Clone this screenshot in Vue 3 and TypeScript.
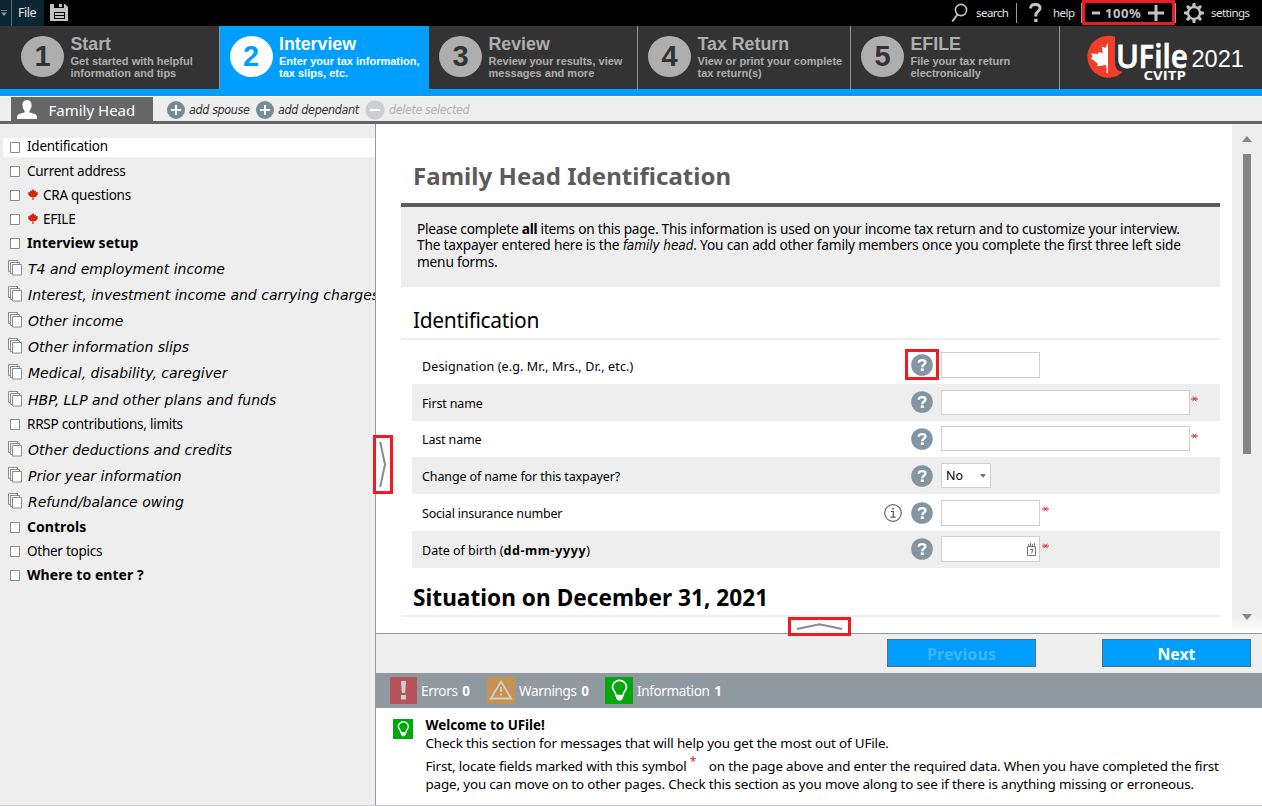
<script setup lang="ts">
interface Step { n: number; title: string; lines: [string, string]; active?: boolean }
interface MenuItem { label: string; kind?: 'multi' | 'bold'; leaf?: boolean; active?: boolean }
interface Field { label: string; strong?: string; control: 'short' | 'long' | 'select' | 'date'; required?: boolean; info?: boolean; marked?: boolean }

const steps: Step[] = [
  { n: 1, title: 'Start', lines: ['Get started with helpful', 'information and tips'] },
  { n: 2, title: 'Interview', lines: ['Enter your tax information,', 'tax slips, etc.'], active: true },
  { n: 3, title: 'Review', lines: ['Review your results, view', 'messages and more'] },
  { n: 4, title: 'Tax Return', lines: ['View or print your complete', 'tax return(s)'] },
  { n: 5, title: 'EFILE', lines: ['File your tax return', 'electronically'] },
]

const menu: MenuItem[] = [
  { label: 'Identification', active: true },
  { label: 'Current address' },
  { label: 'CRA questions', leaf: true },
  { label: 'EFILE', leaf: true },
  { label: 'Interview setup', kind: 'bold' },
  { label: 'T4 and employment income', kind: 'multi' },
  { label: 'Interest, investment income and carrying charges', kind: 'multi' },
  { label: 'Other income', kind: 'multi' },
  { label: 'Other information slips', kind: 'multi' },
  { label: 'Medical, disability, caregiver', kind: 'multi' },
  { label: 'HBP, LLP and other plans and funds', kind: 'multi' },
  { label: 'RRSP contributions, limits' },
  { label: 'Other deductions and credits', kind: 'multi' },
  { label: 'Prior year information', kind: 'multi' },
  { label: 'Refund/balance owing', kind: 'multi' },
  { label: 'Controls', kind: 'bold' },
  { label: 'Other topics' },
  { label: 'Where to enter ?', kind: 'bold' },
]

const fields: Field[] = [
  { label: 'Designation (e.g. Mr., Mrs., Dr., etc.)', control: 'short', marked: true },
  { label: 'First name', control: 'long', required: true },
  { label: 'Last name', control: 'long', required: true },
  { label: 'Change of name for this taxpayer?', control: 'select' },
  { label: 'Social insurance number', control: 'short', required: true, info: true },
  { label: 'Date of birth (', strong: 'dd-mm-yyyy', control: 'date', required: true },
]
</script>

<template>
  <div class="app">
    <header class="topbar">
      <div class="quick"><svg width="11" height="26"><path d="M1 10.5h6" stroke="#75858c" /><path d="M1 12.5h6l-3 3.5z" fill="#8d989d" /></svg></div>
      <div class="file">File</div>
      <svg class="floppy" width="18" height="18" viewBox="0 0 18 18">
        <path fill="#c3c3c3" d="M0 0h15l3 3v14H0z" />
        <path fill="#000" d="M4 0h10v4H4zM4 8h11v7H4z" />
        <path fill="#c3c3c3" d="M9 0h3v3H9zM5 9h9v2H5zM5 12h9v2H5z" />
      </svg>
      <div class="tools">
        <svg class="t-search" width="17" height="20" viewBox="0 0 17 20"><circle cx="10" cy="7" r="5.6" fill="none" stroke="#c3c3c3" stroke-width="1.6" /><path d="M6.5 11.5L1.3 18.5" stroke="#c3c3c3" stroke-width="2" /></svg>
        <span class="l-search">search</span>
        <i class="sep"></i>
        <svg class="t-help" width="13" height="20" viewBox="0 0 13 20"><path d="M1.6 5.4C1.6 2.6 3.4 1.4 6.2 1.4S11 2.8 11 5.3C11 8.7 6.8 8.3 6.8 12.6v1" fill="none" stroke="#c3c3c3" stroke-width="3" /><path d="M5.2 15.8h3.3v3.2H5.2z" fill="#c3c3c3" /></svg>
        <span class="l-help">help</span>
        <i class="sep"></i>
        <div class="zoom">
          <svg width="8" height="4"><path d="M0 0.5h8v3H0z" fill="#c3c3c3" /></svg>
          <b>100%</b>
          <svg width="16" height="16"><path d="M0 6.500h16v3H0zM6.500 0h3v16h-3z" fill="#c3c3c3" /></svg>
        </div>
        <i class="sep"></i>
        <svg class="t-gear" width="20" height="20" viewBox="-10 -10 20 20">
          <circle r="6" fill="none" stroke="#c3c3c3" stroke-width="2.4" />
          <g fill="#c3c3c3"><path v-for="a in 8" :key="a" d="M-1.9 -6.4L-1.3 -10h2.6L1.9 -6.4z" :transform="`rotate(${a * 45})`" /></g>
        </svg>
        <span class="l-set">settings</span>
      </div>
    </header>

    <nav class="steps">
      <div v-for="s in steps" :key="s.n" class="step" :class="['s' + s.n, { active: s.active }]">
        <div class="num">{{ s.n }}</div>
        <div class="desc">
          <div class="name">{{ s.title }}</div>
          <div>{{ s.lines[0] }}</div>
          <div>{{ s.lines[1] }}</div>
        </div>
      </div>
      <svg class="logo" width="202" height="63" viewBox="1060 26 202 63">
        <path fill="#f03e2b" d="M1115 36.8A21 21 0 1 0 1123 71.8C1118 71.5 1115 69 1115 62z" />
        <path fill="#fff" d="M1108 43l-2.800 5-3.400-1.600 1 7-4-1.700-.6 2.400-6.900-.6 1.300 3.500-1.800 1.200 7.100 5.600-.7 2.500 9-1.200.6 8.200h1.200z" />
        <text x="1116" y="68" class="uf u" textLength="23" lengthAdjust="spacingAndGlyphs">U</text>
        <text x="1138.500" y="68" class="uf" textLength="49.500" lengthAdjust="spacingAndGlyphs">File</text>
        <text x="1143.5" y="80" class="cv" textLength="42.5" lengthAdjust="spacingAndGlyphs">CVITP</text>
        <text x="1191.500" y="67" class="yr" textLength="52.500" lengthAdjust="spacingAndGlyphs">2021</text>
      </svg>
    </nav>

    <div class="tabs">
      <div class="tab">
        <svg width="20" height="19" viewBox="0 0 20 19"><path fill="#fff" d="M10 0c3 0 4.600 2 4.600 5 0 2.500-1 4.500-2.200 5.700v1.800c2.600.8 7.600 1.200 7.600 4.200V19H0v-2.300c0-3 5-3.400 7.600-4.200v-1.800C6.400 9.500 5.400 7.500 5.400 5c0-3 1.600-5 4.600-5z" /></svg>
        <span>Family Head</span>
      </div>
      <svg class="round a1" width="20" height="20" viewBox="0 0 20 20"><circle cx="10" cy="10" r="9" fill="#768a98" /><path d="M5 10h10M10 5v10" stroke="#fff" stroke-width="2" /></svg>
      <span class="act w1">add spouse</span>
      <svg class="round" width="20" height="20" viewBox="0 0 20 20"><circle cx="10" cy="10" r="9" fill="#768a98" /><path d="M5 10h10M10 5v10" stroke="#fff" stroke-width="2" /></svg>
      <span class="act w2">add dependant</span>
      <svg class="round" width="20" height="20" viewBox="0 0 20 20"><circle cx="10" cy="10" r="9.700" fill="#cbcfd2" /><path d="M5 10h10" stroke="#fff" stroke-width="2" /></svg>
      <span class="act off">delete selected</span>
    </div>

    <div class="body">
      <aside class="side">
        <div v-for="m in menu" :key="m.label" class="item" :class="[m.kind, { active: m.active }]">
          <svg v-if="m.kind === 'multi'" class="pages" width="15" height="16"><g fill="#fff" stroke="#8a8a8a"><path d="M.5 .5h9v11h-9z" /><path d="M2.500 2.500h9v11h-9z" /><path d="M4.500 4.500h9v10.500h-9z" /></g></svg>
          <svg v-else class="page" width="10" height="11"><path d="M.5 .5h9v10h-9z" fill="#fff" stroke="#8a8a8a" /></svg>
          <svg v-if="m.leaf" class="leaf" width="10" height="11" viewBox="0 0 10 11"><path fill="#cf2a10" d="M5 0l1.300 1.700 1.500-.3v1.700L10 3.200 9.500 5l.5.800-2.400 2.200-2.100.3.100 2.700h-1.200l.1-2.700-2.100-.3L0 5.800.5 5 0 3.200l2.200-.1V1.400l1.500.3z" /></svg>
          <span>{{ m.label }}</span>
        </div>
      </aside>

      <section class="main">
        <div class="page-area">
          <div class="content">
            <h1>Family Head Identification</h1>
            <div class="intro">
              <p class="p1">Please complete <b>all</b> items on this page. This information is used on your income tax return and to customize your interview.</p>
              <p class="p2">The taxpayer entered here is the <em>family head</em>. You can add other family members once you complete the first three left side</p>
              <p class="p3">menu forms.</p>
            </div>
            <h2>Identification</h2>
            <div class="form">
              <div v-for="(f, i) in fields" :key="f.label" class="field" :class="'f' + i">
                <span class="label">{{ f.label }}<template v-if="f.strong"><b>{{ f.strong }}</b>)</template></span>
                <span class="info"><svg v-if="f.info" width="18" height="18" viewBox="0 0 18 18"><circle cx="9" cy="9" r="8.300" fill="#fff" stroke="#666" stroke-width="1.200" /><path d="M7 7.500h2.300v5.500M6.500 13.200h5" fill="none" stroke="#555" stroke-width="1.200" /><path d="M8.200 4h1.600v1.600H8.200z" fill="#555" /></svg></span>
                <span class="help">
                  <svg width="22" height="22" viewBox="0 0 22 22"><circle cx="11" cy="11" r="10.800" fill="#8395a2" /><path d="M7.700 8.700C7.700 6.900 9 6.200 11 6.200s3.500.8 3.500 2.300c0 2.100-3.300 2-3.300 4.700" fill="none" stroke="#fff" stroke-width="2.300" /><path d="M9.800 14.400h3v2.600h-3z" fill="#fff" /></svg>
                  <i v-if="f.marked" class="mark m-help"></i>
                </span>
                <span class="box" :class="f.control">
                  <template v-if="f.control === 'select'">No<svg width="6" height="4"><path d="M0 0h6L3 4z" fill="#777" /></svg></template>
                  <svg v-if="f.control === 'date'" width="9" height="13" viewBox="0 0 9 13"><path d="M.5 3.500h8v9h-8zM1.500 3V1M3.500 3V0M5.500 3V1M7.500 3V0M3 6.500h3L4.500 10.500" fill="none" stroke="#777" /></svg>
                </span>
                <svg v-if="f.required" class="star" width="7" height="6" viewBox="0 0 7 6"><path d="M0 3h7M1.500 .7l4 4.600M5.500 .7l-4 4.600" stroke="#e2231a" stroke-width="1" /></svg>
              </div>
            </div>
            <h2 class="sit">Situation on December 31, 2021</h2>
          </div>
          <div class="scroll">
            <svg width="10" height="6"><path d="M0 6h10L5 0z" fill="#858585" /></svg>
            <div class="thumb"></div>
            <svg class="down" width="10" height="6"><path d="M0 0h10L5 6z" fill="#858585" /></svg>
          </div>
          <div class="mark m-bottom"><svg width="47" height="7"><path d="M1 6L23.500 1.200L46 6" fill="none" stroke="#8a8a8a" stroke-width="2" /></svg></div>
          <div class="mark m-left"><svg width="8" height="47"><path d="M1.200 1L6 23.500L1.200 46" fill="none" stroke="#8a8a8a" stroke-width="2" /></svg></div>
        </div>
        <div class="buttons">
          <button class="btn dim">Previous</button>
          <button class="btn">Next</button>
        </div>
        <div class="status">
          <svg width="27" height="27"><path d="M0 0h27v27H0z" fill="#b9535b" /><path d="M11 4h5l-.8 12h-3.400zM11 18h5v4.500h-5z" fill="#cfcfd2" /></svg>
          <span class="c1">Errors <b>0</b></span>
          <svg width="28" height="27"><path d="M0 0h28v27H0z" fill="#c7924f" /><path d="M14 4.500L24.200 21.500H3.800z" fill="none" stroke="#cfcfd2" stroke-width="1.800" /><path d="M14 10v8.500" stroke="#cfcfd2" stroke-width="1.800" stroke-dasharray="5 1.500" /></svg>
          <span class="c2">Warnings <b>0</b></span>
          <svg width="28" height="27" viewBox="0 0 28 27"><path d="M0 0h28v27H0z" fill="#00a80e" /><path d="M11 18.500C11 15 7.500 13.500 7.500 9.900a7 6.500 0 0 1 14 0C21.500 13.500 18 15 18 18.500z" fill="none" stroke="#fff" stroke-width="1.700" /><path d="M10.500 18.500h8l-1 3.500-1.700 1.600h-2.600L11.500 22z" fill="#fff" /></svg>
          <span class="c3">Information <b>1</b></span>
        </div>
        <div class="messages">
          <svg width="20" height="20" viewBox="0 0 28 28"><path d="M0 0h28v28H0z" fill="#00a80e" /><path d="M11 19C11 15.500 7.500 14 7.500 10.400a7 6.500 0 0 1 14 0C21.500 14 18 15.500 18 19z" fill="none" stroke="#fff" stroke-width="1.900" /><path d="M10.500 19h8l-1 3.500-1.700 1.600h-2.600l-1.700-1.600z" fill="#fff" /></svg>
          <div class="text">
            <p class="w">Welcome to UFile!</p>
            <p class="second">Check this section for messages that will help you get the most out of UFile.</p>
            <p>First, locate fields marked with this symbol <i class="ast">*</i>on the page above and enter the required data. When you have completed the first</p>
            <p>page, you can move on to other pages. Check this section as you move along to see if there is anything missing or erroneous.</p>
          </div>
        </div>
      </section>
    </div>
  </div>
</template>

<style>
body { margin: 0; background: #fff; }
</style>

<style scoped>
* { box-sizing: border-box; }
.app { width: 1262px; height: 806px; overflow: hidden; display: flex; flex-direction: column; font-family: "Noto Sans", "Open Sans", sans-serif; color: #000; white-space: nowrap; }
svg { display: block; flex: none; }
p, h1, h2 { margin: 0; }

.topbar { height: 26px; flex: none; background: #000; display: flex; align-items: center; color: #e4e4e4; }
.quick { width: 11px; height: 26px; background: #0b2532; }
.file { width: 33px; height: 26px; background: #0b2532; border-left: 1px solid #5d6b72; padding-left: 6px; font-size: 12.500px; line-height: 25px; letter-spacing: -.45px; }
.floppy { margin-left: 6px; margin-top: -1px; }
.tools { display: flex; align-items: center; height: 26px; margin-left: 883px; font-size: 11.500px; letter-spacing: -.55px; line-height: 26px; }
.sep { width: 1px; height: 20px; background: #9a9a9a; }
.t-search { margin-top: -1px; }
.l-search { margin-left: 8px; width: 40px; }
.t-help { margin: 0 0 0 12px; }
.l-help { margin-left: 11px; width: 28px; }
.zoom { width: 93px; height: 25px; border: 3px solid #ed1c24; margin-top: -1px; display: flex; align-items: center; padding-left: 7px; color: #c3c3c3; }
.zoom b { font-size: 13px; letter-spacing: .6px; line-height: 18px; margin: 1px 0 0 5px; width: 43px; }
.t-gear { margin-left: 8px; }
.l-set { margin-left: 7px; }

.steps { height: 63px; flex: none; background: #333; display: flex; }
.step { display: flex; height: 63px; border-right: 1px solid #8d979d; font: bold 11px/12px "Liberation Sans", Arial, sans-serif; color: #aeaeae; padding-top: 10px; }
.num { width: 43px; height: 41px; border-radius: 50%; background: #aeaeae; color: #333; font-size: 29px; line-height: 41px; text-align: center; margin-right: 6.500px; flex: none; }
.name { font-size: 17.800px; line-height: 17px; height: 19px; }
.active.step { background: #009fff; color: #fff; border-right-color: #009fff; }
.active .num { background: #fff; color: #009fff; }
.s1 { width: 220px; padding-left: 21px; }
.s2 { width: 209px; padding-left: 9.500px; }
.s3 { width: 209px; padding-left: 10px; }
.s4 { width: 213px; padding-left: 10px; }
.s5 { width: 209px; padding-left: 10px; }
.uf { font: 600 32px "Noto Sans", sans-serif; fill: #fff; stroke: #fff; stroke-width: .4px; }
.u { font-weight: 500; stroke-width: .8px; }
.cv { font: bold 13px "Open Sans", sans-serif; fill: #fff; }
.yr { font: 23.500px "Liberation Sans", Arial, sans-serif; fill: #fff; }

.tabs { height: 35px; flex: none; border-top: 7px solid #009fff; border-bottom: 3px solid #666; background: #eee; box-shadow: inset 0 1px #fff; display: flex; align-items: center; }
.tab { height: 24px; margin: 1px 12px 0 11px; width: 142px; background: #666; display: flex; align-items: center; color: #fff; font-size: 15px; line-height: 26px; padding-left: 6px; }
.tab span { margin: 1px 0 0 11.500px; }
.round { margin: 2px -1px 0 1px; }
.act { font: italic 12.500px/26px "DejaVu Sans Condensed", "DejaVu Sans", sans-serif; letter-spacing: -.4px; margin: 3px 0 0 4px; color: #333; }
.w1 { width: 65px; }
.w2 { width: 86px; letter-spacing: -.36px; }
.off { color: #b4b4b4; margin-left: 5px; letter-spacing: -.42px; }

.body { flex: 1; display: flex; min-height: 0; border-bottom: 1px solid #c0ced6; }
.side { width: 376px; flex: none; background: #eee; border-right: 1px solid #8f989f; padding-top: 14px; overflow: hidden; }
.item { height: 24px; display: flex; align-items: center; font-size: 13.500px; letter-spacing: -.25px; line-height: 24px; padding-left: 10px; }
.page { margin: 1px 7px 0 0; }
.leaf { margin: -1px 5px 0 1px; }
.item.active { height: 19px; background: #fff; margin: 0 0 2px 3px; padding-left: 7px; line-height: 16px; }
.item.active span { margin-top: -3px; }
.item.active .page { margin-top: -1px; }
.item.bold { font-weight: bold; font-size: 14px; letter-spacing: .05px; }
.item.multi { height: 26.220px; padding-left: 8px; font: italic 14px/26px "DejaVu Sans", sans-serif; letter-spacing: 0; }
.item.multi span { padding-top: 1px; }
.pages { margin: -1px 5px 0 0; }

.main { flex: 1; min-width: 0; display: flex; flex-direction: column; }
.page-area { height: 510px; flex: none; display: flex; border-bottom: 1px solid #8f989f; position: relative; }
.content { width: 856px; padding: 0 12px 0 25px; }
h1 { height: 83px; border-bottom: 4px solid #5b5b5b; font-size: 24px; line-height: 34px; padding: 35px 0 0 12px; color: #5b5b5b; letter-spacing: .04px; }
.intro { height: 80px; background: #eee; padding: 14px 0 0 16px; font-size: 13.700px; line-height: 16.400px; letter-spacing: -.2px; }
.p1 { letter-spacing: -.245px; }
.intro em { font: italic 13.500px/16px "DejaVu Sans Condensed", sans-serif; letter-spacing: -.1px; }
h2 { height: 53px; border-bottom: 2px solid #eee; font-size: 21px; font-weight: normal; letter-spacing: -.36px; line-height: 30px; padding: 18px 0 0 12px; }
.form { margin: 7px 0 0 11px; }
.field { height: 36.800px; display: flex; align-items: center; font-size: 12.500px; line-height: 20px; padding-left: 10px; }
.field:nth-child(even) { background: #eee; }
.label { width: 462px; padding-top: 3px; }
.f0 .label { letter-spacing: .13px; }
.f1 .label, .f2 .label { letter-spacing: -.15px; }
.f3 .label { letter-spacing: -.12px; }
.f4 .label { letter-spacing: -.2px; }
.f5 .label b { letter-spacing: .6px; }
.info { width: 27px; }
.help { width: 30px; position: relative; padding-top: 0; }
.box { background: #fff; border: 1px solid #d0d0d0; width: 99px; height: 26px; display: flex; align-items: center; }
.long { width: 249px; height: 25px; }
.select { width: 50px; height: 25px; padding: 0 4px 0 4px; justify-content: space-between; font-size: 12.500px; }
.date { justify-content: flex-end; padding-right: 3px; }
.star { align-self: flex-start; margin: 12px 0 0 1px; }
.short + .star, .date + .star { margin-left: 2px; }
.sit { height: 49px; font-size: 22.600px; font-weight: bold; letter-spacing: 0.04px; padding-top: 15px; line-height: 29px; }

.scroll { width: 30px; height: 509px; background: linear-gradient(#eee 490px, #fff 509px); display: flex; flex-direction: column; align-items: center; padding-top: 12px; }
.thumb { width: 8px; height: 300px; background: #858585; margin-top: 12px; }
.down { margin-top: 160px; }

.mark { position: absolute; border: 3px solid #ed1c24; display: flex; align-items: center; justify-content: center; }
.m-help { left: -6px; top: -5px; width: 34px; height: 31px; }
.m-bottom { left: 412px; top: 493px; width: 63px; height: 19px; background: #fff; }
.m-left { left: -3px; top: 311px; width: 20px; height: 59px; background: #fff; }

.buttons { height: 39px; flex: none; background: #eee; display: flex; justify-content: flex-end; padding: 5px 11px 0 0; gap: 66px; }
.btn { width: 149px; height: 28px; border: 1px solid #5f6a72; background: #009fff; color: #fff; font: bold 15.800px/24px "Noto Sans", sans-serif; padding: 1px 0 0; }
.dim { color: #40b4f9; letter-spacing: .2px; }
.status { height: 35px; flex: none; background: #9098a0; color: #fff; display: flex; align-items: center; padding-left: 14px; font-size: 13.500px; letter-spacing: -.35px; }
.status b { letter-spacing: 0; margin-left: 1.500px; }
.status span { margin-left: 4px; }
.c1 { width: 66px; }
.c2 { width: 86px; }
.messages { flex: 1; background: #fff; display: flex; padding: 8px 0 0 17px; font-size: 13.400px; line-height: 18px; letter-spacing: -.145px; }
.messages svg { margin-top: 3px; }
.text { margin-left: 12.500px; }
.second { margin-bottom: 5px; }
.w { font-weight: bold; letter-spacing: 0; }
.ast { display: inline-block; width: 19px; color: #e2231a; font-style: normal; line-height: 10px; font-size: 12px; vertical-align: 5px; }
</style>
